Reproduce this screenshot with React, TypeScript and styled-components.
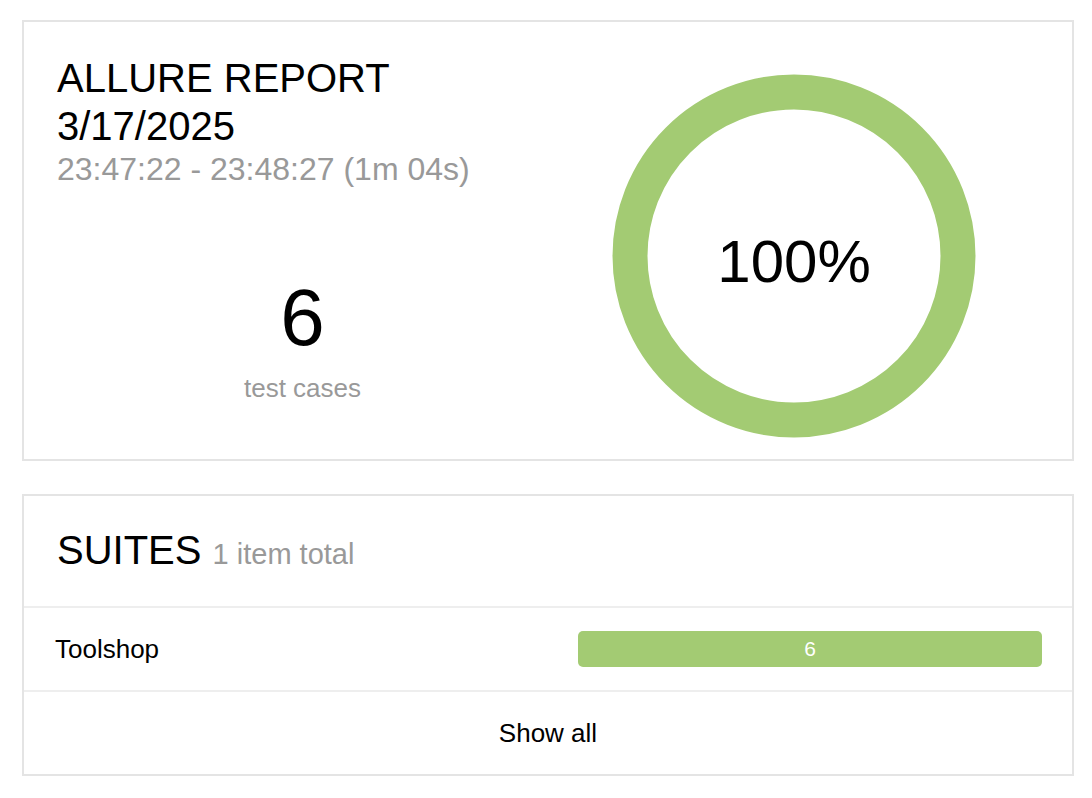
import React from 'react';
import styled, { createGlobalStyle } from 'styled-components';

const GlobalStyle = createGlobalStyle`
    body {
        margin: 0;
        background: #fff;
        font-family: 'Liberation Sans', Arial, sans-serif;
        color: #000;
    }
`;

const Page = styled.div`
    display: flex;
    flex-direction: column;
    gap: 33px;
    padding: 20px 18px 0 22px;
`;

const Card = styled.section`
    border: 2px solid #e4e4e4;
    background: #fff;
`;

const SummaryBody = styled.div`
    display: grid;
    grid-template-columns: 1fr 1fr;
    padding: 32px 33px 21px 33px;
`;

const LeftColumn = styled.div`
    display: flex;
    flex-direction: column;
`;

const Title = styled.h2`
    margin: 0;
    font-size: 40px;
    line-height: 48px;
    font-weight: normal;
`;

const Subtitle = styled.div`
    font-size: 32px;
    line-height: 38px;
    color: #999;
`;

const Stat = styled.div`
    display: flex;
    flex-direction: column;
    align-items: center;
    margin-top: 90px;
`;

const StatValue = styled.div`
    font-size: 80px;
    line-height: 80px;
`;

const StatLabel = styled.div`
    margin-top: 15px;
    font-size: 26px;
    line-height: 31px;
    color: #999;
`;

const ChartColumn = styled.div`
    display: flex;
    justify-content: center;
    padding-top: 20px;
`;

const SectionHeader = styled.div`
    height: 48px;
    padding: 30px 33px 32px 33px;
    border-bottom: 2px solid #eeeeee;
    font-size: 40px;
    line-height: 48px;
`;

const Count = styled.span`
    font-size: 29px;
    line-height: 1;
    color: #999;
`;

const SuiteRow = styled.div`
    display: grid;
    grid-template-columns: 1fr 464px;
    align-items: center;
    height: 82px;
    padding: 0 30px 0 31px;
    border-bottom: 2px solid #eeeeee;
`;

const SuiteName = styled.div`
    font-size: 26px;
`;

const Bar = styled.div<{ $color: string }>`
    height: 36px;
    border-radius: 5px;
    background: ${(p) => p.$color};
    color: #fff;
    font-size: 21px;
    line-height: 36px;
    text-align: center;
`;

const ShowAll = styled.div`
    height: 82px;
    line-height: 82px;
    text-align: center;
    font-size: 26px;
`;

const GREEN = '#a3cb73';

const Donut = ({ percent }: { percent: number }) => (
    <svg width="364" height="364" viewBox="0 0 364 364">
        <circle cx="182" cy="182" r="164" fill="none" stroke={GREEN} strokeWidth="35" />
        <text
            x="182"
            y="208"
            textAnchor="middle"
            fontSize="60"
            fontFamily="'Liberation Sans', Arial, sans-serif"
            fill="#000"
        >
            {percent}%
        </text>
    </svg>
);

const suites = [{ name: 'Toolshop', passed: 6 }];

const App = () => {
    return (
        <>
            <GlobalStyle />
            <Page>
                <Card>
                    <SummaryBody>
                        <LeftColumn>
                            <Title>
                                ALLURE REPORT
                                <br />
                                3/17/2025
                            </Title>
                            <Subtitle>23:47:22 - 23:48:27 (1m 04s)</Subtitle>
                            <Stat>
                                <StatValue>6</StatValue>
                                <StatLabel>test cases</StatLabel>
                            </Stat>
                        </LeftColumn>
                        <ChartColumn>
                            <Donut percent={100} />
                        </ChartColumn>
                    </SummaryBody>
                </Card>
                <Card>
                    <SectionHeader>
                        SUITES <Count>1 item total</Count>
                    </SectionHeader>
                    {suites.map((s) => (
                        <SuiteRow key={s.name}>
                            <SuiteName>{s.name}</SuiteName>
                            <Bar $color={GREEN}>{s.passed}</Bar>
                        </SuiteRow>
                    ))}
                    <ShowAll>Show all</ShowAll>
                </Card>
            </Page>
        </>
    );
};

export default App;
